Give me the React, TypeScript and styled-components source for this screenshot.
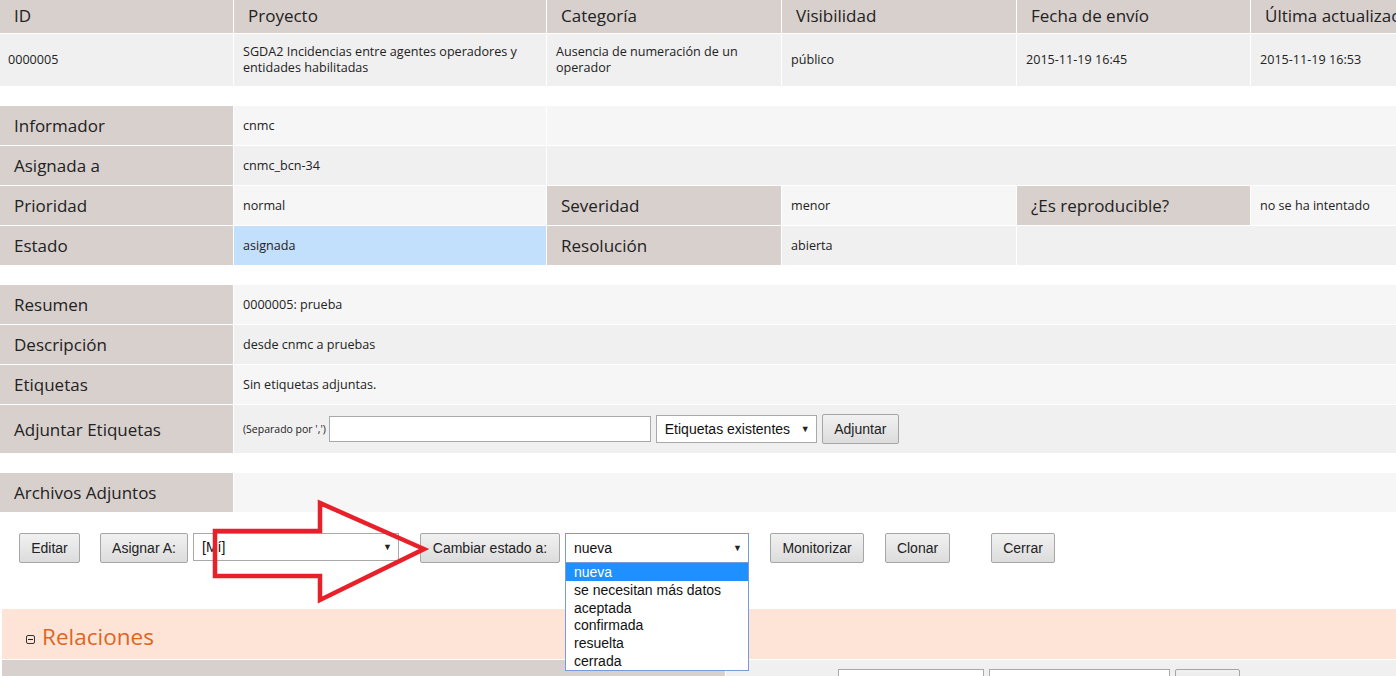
import React from 'react';
import styled, { createGlobalStyle } from 'styled-components';

const GlobalStyle = createGlobalStyle`
  html, body {
    margin: 0;
    padding: 0;
    background: #ffffff;
    overflow: hidden;
  }
  body {
    font-family: 'Open Sans', 'Noto Sans', sans-serif;
    color: #222;
  }
`;

const Page = styled.div`
  position: relative;
  width: 1396px;
  height: 676px;
  overflow: hidden;
`;

const Table = styled.div<{ mt?: number }>`
  display: grid;
  grid-template-columns: 233px 312px 234px 234px 233px 300px;
  gap: 1px;
  width: 1550px;
  margin-top: ${({ mt }) => mt ?? 0}px;
`;

const HeadCell = styled.div`
  background: #d8d0cd;
  height: 33px;
  padding: 0 0 3px 14px;
  box-sizing: border-box;
  display: flex;
  align-items: center;
  font-size: 17px;
  color: #222;
  white-space: nowrap;
  overflow: hidden;
`;

const DataCell = styled.div<{ pl?: number }>`
  background: #f0f0f0;
  height: 52px;
  padding: 0 10px 0 ${({ pl }) => pl ?? 9}px;
  display: flex;
  align-items: center;
  font-size: 12.6px;
  line-height: 16px;
  color: #222;
  white-space: nowrap;
  overflow: hidden;
`;

const Label = styled.div<{ h?: number }>`
  background: #d8d0cd;
  height: ${({ h }) => h ?? 39}px;
  padding-left: 14px;
  display: flex;
  align-items: center;
  font-size: 17px;
  color: #222;
  white-space: nowrap;
`;

const Value = styled.div<{ alt?: boolean; span?: number; hl?: boolean; h?: number }>`
  background: ${({ alt, hl }) => (hl ? '#c2dffb' : alt ? '#f0f0f0' : '#f6f6f6')};
  grid-column: span ${({ span }) => span ?? 1};
  height: ${({ h }) => h ?? 39}px;
  padding-left: 9px;
  display: flex;
  align-items: center;
  gap: 5px;
  font-size: 12.6px;
  color: #222;
  white-space: nowrap;
`;

const Hint = styled.span`
  font-size: 10.5px;
  margin-right: -2px;
`;

const TextInput = styled.div<{ w: number }>`
  width: ${({ w }) => w}px;
  height: 26px;
  box-sizing: border-box;
  background: #fff;
  border: 1px solid #a9a9a9;
`;

const SelectBox = styled.div<{ w: number; focus?: boolean }>`
  width: ${({ w }) => w}px;
  height: ${({ focus }) => (focus ? 30 : 28)}px;
  box-sizing: border-box;
  background: #fff;
  border: 1px solid ${({ focus }) => (focus ? '#7a9bd6' : '#a9a9a9')};
  display: flex;
  align-items: center;
  justify-content: space-between;
  padding: 0 6px 0 8px;
  font-family: 'Liberation Sans', Arial, sans-serif;
  font-size: 14px;
  color: #111;
  position: relative;
`;

const Caret = styled.span`
  font-size: 9px;
  color: #222;
`;

const Button = styled.div<{ ml?: number; w?: number }>`
  height: 30px;
  box-sizing: border-box;
  padding: 0 11px;
  margin-left: ${({ ml }) => ml ?? 0}px;
  ${({ w }) => (w ? `width: ${w}px; justify-content: center;` : '')}
  display: flex;
  align-items: center;
  flex-shrink: 0;
  border: 1px solid #a6a6a6;
  border-radius: 2px;
  background: linear-gradient(#f1f1f1, #dcdcdc);
  font-family: 'Liberation Sans', Arial, sans-serif;
  font-size: 14px;
  color: #222;
  white-space: nowrap;
`;

const ActionBar = styled.div`
  display: flex;
  align-items: flex-start;
  height: 97px;
  padding: 21px 0 0 19px;
  box-sizing: border-box;
  gap: 5px;
`;

const Dropdown = styled.div`
  position: absolute;
  left: -1px;
  top: 28px;
  width: 184px;
  box-sizing: border-box;
  background: #fff;
  border: 1px solid #7a9bd6;
  z-index: 5;
`;

const Option = styled.div<{ selected?: boolean }>`
  height: 17.8px;
  line-height: 18px;
  padding-left: 8px;
  font-size: 14px;
  background: ${({ selected }) => (selected ? '#1e90ff' : '#fff')};
  color: ${({ selected }) => (selected ? '#fff' : '#111')};
  white-space: nowrap;
`;

const Section = styled.div`
  margin-left: 2px;
  height: 51px;
  background: #fde4d7;
  display: flex;
  align-items: center;
  padding: 4px 0 0 24px;
  box-sizing: border-box;
  gap: 7px;
  border-bottom: 1px solid #fff;
`;

const Toggle = styled.span`
  width: 7px;
  height: 7px;
  border: 1px solid #333;
  border-radius: 2px;
  position: relative;
  margin-top: 6px;
  &::after {
    content: '';
    position: absolute;
    left: 1px;
    right: 1px;
    top: 3px;
    height: 1px;
    background: #222;
  }
`;

const SectionTitle = styled.span`
  font-size: 22.5px;
  color: #e0641f;
`;

const BottomRow = styled.div`
  margin-left: 2px;
  display: grid;
  grid-template-columns: 723px 1fr;
  gap: 1px;
  height: 40px;
`;

const BottomLabel = styled.div`
  background: #d8d0cd;
`;

const BottomValue = styled.div`
  background: #f0f0f0;
  display: flex;
  align-items: flex-start;
  padding: 9px 0 0 112px;
  gap: 5px;
`;

const Arrow = styled.svg`
  position: absolute;
  left: 210px;
  top: 498px;
  pointer-events: none;
  z-index: 10;
`;

const statusOptions = ['nueva', 'se necesitan más datos', 'aceptada', 'confirmada', 'resuelta', 'cerrada'];

const App: React.FC = () => {
  return (
    <Page>
      <GlobalStyle />

      <Table>
        <HeadCell>ID</HeadCell>
        <HeadCell>Proyecto</HeadCell>
        <HeadCell>Categoría</HeadCell>
        <HeadCell>Visibilidad</HeadCell>
        <HeadCell>Fecha de envío</HeadCell>
        <HeadCell>Última actualización</HeadCell>
        <DataCell pl={8}>0000005</DataCell>
        <DataCell>
          SGDA2 Incidencias entre agentes operadores y<br />entidades habilitadas
        </DataCell>
        <DataCell>
          Ausencia de numeración de un<br />operador
        </DataCell>
        <DataCell>público</DataCell>
        <DataCell>2015-11-19 16:45</DataCell>
        <DataCell>2015-11-19 16:53</DataCell>
      </Table>

      <Table mt={20}>
        <Label>Informador</Label>
        <Value>cnmc</Value>
        <Value span={4} />
        <Label>Asignada a</Label>
        <Value alt>cnmc_bcn-34</Value>
        <Value alt span={4} />
        <Label>Prioridad</Label>
        <Value>normal</Value>
        <Label>Severidad</Label>
        <Value>menor</Value>
        <Label>¿Es reproducible?</Label>
        <Value>no se ha intentado</Value>
        <Label>Estado</Label>
        <Value hl>asignada</Value>
        <Label>Resolución</Label>
        <Value alt>abierta</Value>
        <Value alt span={2} />
      </Table>

      <Table mt={20}>
        <Label>Resumen</Label>
        <Value span={5}>0000005: prueba</Value>
        <Label>Descripción</Label>
        <Value alt span={5}>desde cnmc a pruebas</Value>
        <Label>Etiquetas</Label>
        <Value span={5}>Sin etiquetas adjuntas.</Value>
        <Label h={48}>Adjuntar Etiquetas</Label>
        <Value alt span={5} h={48}>
          <Hint>(Separado por ',')</Hint>
          <TextInput w={322} />
          <SelectBox w={161}>
            Etiquetas existentes <Caret>▼</Caret>
          </SelectBox>
          <Button w={77}>Adjuntar</Button>
        </Value>
      </Table>

      <Table mt={20}>
        <Label>Archivos Adjuntos</Label>
        <Value span={5} />
      </Table>

      <ActionBar>
        <Button w={61}>Editar</Button>
        <Button w={88} ml={15}>Asignar A:</Button>
        <SelectBox w={206}>
          [Mí] <Caret>▼</Caret>
        </SelectBox>
        <Button w={140} ml={16}>Cambiar estado a:</Button>
        <SelectBox w={184} focus>
          nueva <Caret>▼</Caret>
          <Dropdown>
            {statusOptions.map((o, i) => (
              <Option key={o} selected={i === 0}>
                {o}
              </Option>
            ))}
          </Dropdown>
        </SelectBox>
        <Button w={94} ml={16}>Monitorizar</Button>
        <Button w={65} ml={16}>Clonar</Button>
        <Button w={64} ml={36}>Cerrar</Button>
      </ActionBar>

      <Section>
        <Toggle />
        <SectionTitle>Relaciones</SectionTitle>
      </Section>

      <BottomRow>
        <BottomLabel />
        <BottomValue>
          <TextInput w={146} />
          <TextInput w={181} />
          <Button w={65} />
        </BottomValue>
      </BottomRow>

      <Arrow width="220" height="108" viewBox="0 0 220 108">
        <polygon
          points="5,33 110,33 110,5 214,51 110,102 110,78 5,78"
          fill="none"
          stroke="#e8202a"
          strokeWidth="4.5"
          strokeLinejoin="miter"
        />
      </Arrow>
    </Page>
  );
};

export default App;
